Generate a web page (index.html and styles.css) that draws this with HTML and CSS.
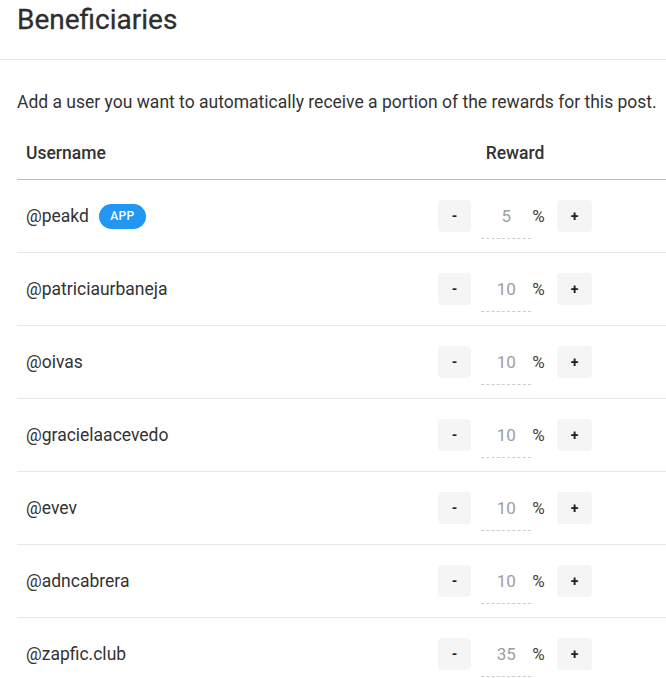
FILE: index.html
```html
<!DOCTYPE html>
<html lang="en">
<head>
<meta charset="utf-8">
<title>Beneficiaries</title>
<link rel="stylesheet" href="styles.css">
</head>
<body>
<div class="modal">
  <div class="modal-head">
    <h1 class="title">Beneficiaries</h1>
  </div>
  <div class="modal-body">
    <p class="desc">Add a user you want to automatically receive a portion of the rewards for this post.</p>
    <div class="table">
      <div class="row head">
        <div class="cell user">Username</div>
        <div class="cell reward">Reward</div>
      </div>
      <div class="row">
        <div class="cell user">@peakd <span class="badge">APP</span></div>
        <div class="cell reward"><div class="ctrl"><button class="btn minus">-</button><input class="num" value="5"><span class="pct">%</span><button class="btn plus">+</button></div></div>
      </div>
      <div class="row">
        <div class="cell user">@patriciaurbaneja</div>
        <div class="cell reward"><div class="ctrl"><button class="btn minus">-</button><input class="num" value="10"><span class="pct">%</span><button class="btn plus">+</button></div></div>
      </div>
      <div class="row">
        <div class="cell user">@oivas</div>
        <div class="cell reward"><div class="ctrl"><button class="btn minus">-</button><input class="num" value="10"><span class="pct">%</span><button class="btn plus">+</button></div></div>
      </div>
      <div class="row">
        <div class="cell user">@gracielaacevedo</div>
        <div class="cell reward"><div class="ctrl"><button class="btn minus">-</button><input class="num" value="10"><span class="pct">%</span><button class="btn plus">+</button></div></div>
      </div>
      <div class="row">
        <div class="cell user">@evev</div>
        <div class="cell reward"><div class="ctrl"><button class="btn minus">-</button><input class="num" value="10"><span class="pct">%</span><button class="btn plus">+</button></div></div>
      </div>
      <div class="row">
        <div class="cell user">@adncabrera</div>
        <div class="cell reward"><div class="ctrl"><button class="btn minus">-</button><input class="num" value="10"><span class="pct">%</span><button class="btn plus">+</button></div></div>
      </div>
      <div class="row">
        <div class="cell user">@zapfic.club</div>
        <div class="cell reward"><div class="ctrl"><button class="btn minus">-</button><input class="num" value="35"><span class="pct">%</span><button class="btn plus">+</button></div></div>
      </div>
    </div>
  </div>
</div>
</body>
</html>
```

FILE: styles.css
```css
* { box-sizing: border-box; }
html, body { margin: 0; padding: 0; background: #fff; }
body {
  font-family: Roboto, "Liberation Sans", sans-serif;
  color: #333;
  width: 666px;
  overflow: hidden;
}
.modal-head {
  height: 60px;
  border-bottom: 1px solid #e8e8e8;
  padding: 0 17px;
}
.title {
  margin: 0;
  font-size: 28px;
  font-weight: 400;
  line-height: 40px;
  color: #2e2e2e;
  -webkit-text-stroke: 0.3px #2e2e2e;
}
.modal-body {
  padding: 30px 0 0 17px;
}
.desc {
  margin: 0;
  font-size: 17.5px;
  line-height: 24px;
  color: #333;
  white-space: nowrap;
}
.table {
  margin-top: 13px;
  width: 649px;
}
.row {
  display: grid;
  grid-template-columns: 1fr 302px;
  height: 73px;
  border-bottom: 1px solid #e8e8e8;
  padding: 20px 0 0;
  font-size: 17.5px;
}
.row.head {
  height: 53px;
  padding: 14px 0 0;
  border-bottom: 1px solid #bdbdbd;
  font-weight: 500;
}
.cell { line-height: 24px; }
.row:not(.head) .cell.user {
  display: flex;
  align-items: center;
  height: 32px;
  padding-left: 9px;
  color: #333;
}
.row.head .cell.user { padding-left: 9px; }
.cell.reward { display: flex; justify-content: center; }
.badge {
  display: inline-flex;
  align-items: center;
  justify-content: center;
  width: 47px;
  height: 25px;
  margin-left: 10px;
  border-radius: 13px;
  background: #2196f3;
  color: #fff;
  font-size: 12px;
  font-weight: 500;
  letter-spacing: 0.3px;
}
.ctrl {
  display: flex;
  align-items: flex-start;
}
.btn {
  height: 32px;
  padding: 0 14px;
  border: 0;
  border-radius: 4px;
  background: #f5f5f5;
  color: #222;
  font-family: Roboto, "Liberation Sans", sans-serif;
  font-size: 14px;
  font-weight: 700;
  line-height: 32px;
}
.num {
  width: 50px;
  height: 39px;
  margin-left: 10px;
  padding: 0 0 6px;
  border: 0;
  border-bottom: 1px dashed #ccc;
  background: transparent;
  font-family: Roboto, "Liberation Sans", sans-serif;
  font-size: 17px;
  line-height: 32px;
  color: #9e9e9e;
  text-align: center;
}
.pct {
  margin: 0 12px 0 1px;
  font-size: 17px;
  line-height: 32px;
  color: #444;
}
```
